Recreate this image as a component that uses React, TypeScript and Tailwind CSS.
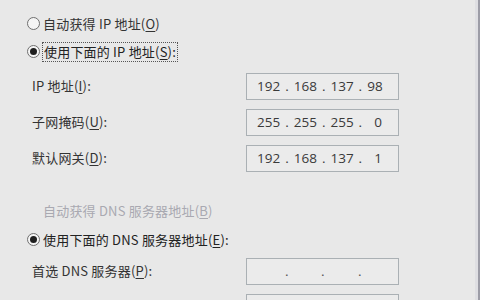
import React from 'react';

const FONT = "font-['Segoe_UI','Noto_Sans_CJK_SC','Noto_Sans',sans-serif]";

function Radio({ checked }: { checked?: boolean }) {
  return (
    <span className="w-[13px] h-[13px] rounded-full border border-[#6f6f6f] bg-[#f4f4f4] flex items-center justify-center shrink-0">
      {checked && <span className="w-[7px] h-[7px] rounded-full bg-[#1e1e1e]" />}
    </span>
  );
}

function Key({ k }: { k: string }) {
  return <span className="underline underline-offset-2">{k}</span>;
}

function IpBox({ value, blank }: { value?: string[]; blank?: boolean }) {
  return (
    <div className="w-[153px] h-[27px] border border-[#aab0b4] bg-[#ebebeb] flex items-center pl-[10px] text-[13.5px] text-[#3a3a3a] font-['Open_Sans',sans-serif]">
      {value ? (
        <div className="flex items-center gap-[5px]">
          {value.map((v, i) => (
            <React.Fragment key={i}>
              {i > 0 && <span>.</span>}
              <span className={i === 3 && v.length === 1 ? 'pl-[7px]' : ''}>{v}</span>
            </React.Fragment>
          ))}
        </div>
      ) : blank ? null : (
        <div className="flex w-full">
          <span className="w-[28px]" />
          <span className="w-[36px] text-[#555]">.</span>
          <span className="w-[37px] text-[#555]">.</span>
          <span className="text-[#555]">.</span>
        </div>
      )}
    </div>
  );
}

function Field({ label, value, blank }: { label?: React.ReactNode; value?: string[]; blank?: boolean }) {
  return (
    <div className="flex items-center h-[27px] pl-[32px]">
      <span className="w-[214px] text-[13px] tracking-[0.2px] text-[#333]">{label}</span>
      <IpBox value={value} blank={blank} />
    </div>
  );
}

export default function App() {
  return (
    <div className={`${FONT} w-[480px] h-[300px] overflow-hidden bg-[#e8e8e8] flex`}>
      <div className="flex-1 flex flex-col pt-[14px]">
        <div className="flex items-center h-[20px] pl-[27px] gap-[3px] text-[13px] tracking-[0.2px] text-[#333]">
          <Radio />
          <span>自动获得 IP 地址(<Key k="O" />)</span>
        </div>
        <div className="flex items-center h-[20px] mt-[8px] pl-[27px] gap-[2px] text-[13px] tracking-[0.2px] text-[#222]">
          <Radio checked />
          <span className="border border-dotted border-[#555] px-[1px] leading-[18px]">使用下面的 IP 地址(<Key k="S" />):</span>
        </div>
        <div className="flex flex-col gap-[9px] mt-[11px]">
          <Field label={<>IP 地址(<Key k="I" />):</>} value={['192', '168', '137', '98']} />
          <Field label={<>子网掩码(<Key k="U" />):</>} value={['255', '255', '255', '0']} />
          <Field label={<>默认网关(<Key k="D" />):</>} value={['192', '168', '137', '1']} />
        </div>
        <div className="h-[20px] mt-[29px] pl-[43px] flex items-center text-[13px] tracking-[0.2px] text-[#a9a9b1]">
          自动获得 DNS 服务器地址(<Key k="B" />)
        </div>
        <div className="flex items-center h-[20px] mt-[10px] pl-[27px] gap-[3px] text-[13px] tracking-[0.2px] text-[#222]">
          <Radio checked />
          <span>使用下面的 DNS 服务器地址(<Key k="E" />):</span>
        </div>
        <div className="flex flex-col gap-[9px] mt-[8px]">
          <Field label={<>首选 DNS 服务器(<Key k="P" />):</>} />
          <Field blank />
        </div>
      </div>
      <div className="w-[3px] bg-[#dedee2]" />
      <div className="w-[2px] bg-[#9c9ca6]" />
    </div>
  );
}
